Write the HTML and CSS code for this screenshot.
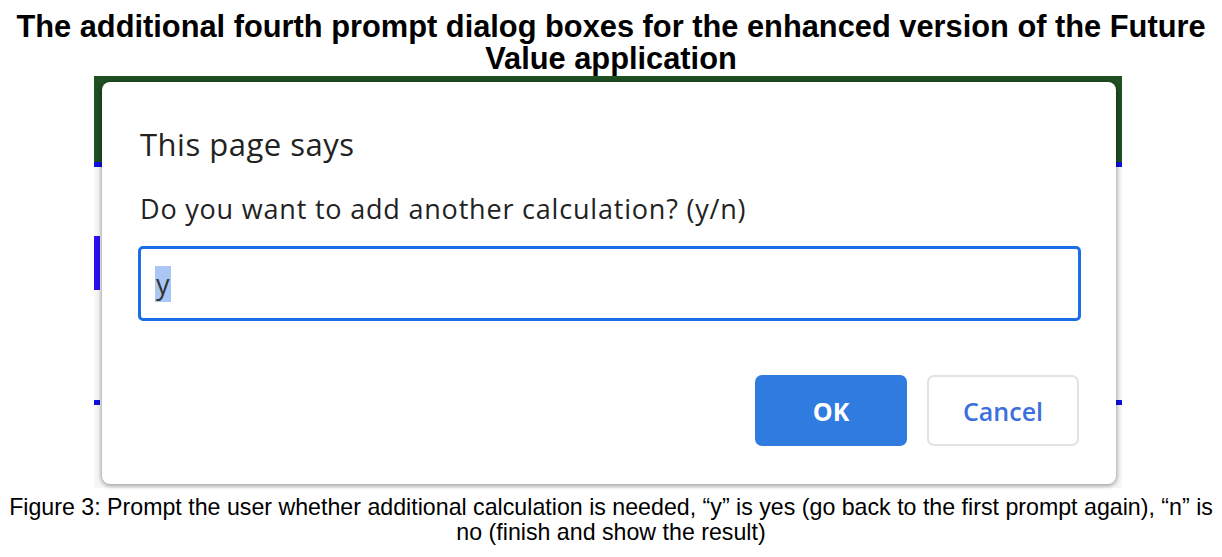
FILE: index.html
```html
<!DOCTYPE html>
<html>
<head>
<meta charset="utf-8">
<link rel="stylesheet" href="styles.css">
</head>
<body>
<h1 class="title">The additional fourth prompt dialog boxes for the enhanced version of the Future Value application</h1>
<div class="shot">
  <div class="dialog">
    <div class="heading">This page says</div>
    <div class="message">Do you want to add another calculation? (y/n)</div>
    <div class="field"><span class="sel">y</span></div>
    <div class="actions">
      <div class="btn ok">OK</div>
      <div class="btn cancel">Cancel</div>
    </div>
  </div>
</div>
<p class="caption">Figure 3: Prompt the user whether additional calculation is needed, “y” is yes (go back to the first prompt again), “n” is no (finish and show the result)</p>
</body>
</html>
```
FILE: styles.css
```css
html, body {
  margin: 0;
  padding: 0;
  background: #ffffff;
}
body {
  width: 1222px;
  height: 557px;
  overflow: hidden;
  font-family: "Liberation Sans", Arial, sans-serif;
  color: #000;
}
.title {
  margin: 11px 0 0 0;
  font-size: 30.8px;
  line-height: 32px;
  font-weight: bold;
  text-align: center;
  height: 65px;
}
.shot {
  margin-left: 94px;
  width: 1028px;
  height: 412px;
  display: flex;
  background-color: #f6f6f6;
  background-image:
    linear-gradient(#1f4f22, #1f4f22),
    linear-gradient(#1010e0, #1010e0),
    linear-gradient(#2a10f0, #2a10f0),
    linear-gradient(#1010e0, #1010e0),
    linear-gradient(#1010e0, #1010e0);
  background-size: 1028px 86px, 1028px 5px, 6px 54px, 6px 5px, 6px 5px;
  background-position: 0 0, 0 86px, 0 160px, 0 324px, 1022px 324px;
  background-repeat: no-repeat;
}
.dialog {
  margin: 6px 0 0 8px;
  width: 1014px;
  height: 402px;
  box-sizing: border-box;
  background: #fff;
  border-radius: 8px;
  box-shadow: 0 1px 4px 1px rgba(0,0,0,0.35);
  padding: 42px 35px 0 38px;
  font-family: "Open Sans", "Noto Sans", sans-serif;
  display: flex;
  flex-direction: column;
}
.heading {
  font-size: 31px;
  letter-spacing: 0.5px;
  line-height: 40px;
  color: #222;
}
.message {
  margin-top: 29px;
  font-size: 27px;
  letter-spacing: 0.8px;
  line-height: 32px;
  color: #222;
}
.field {
  margin: 21px 0 0 -2px;
  height: 75px;
  box-sizing: border-box;
  border: 3px solid #1a6fe6;
  border-radius: 5px;
  display: flex;
  align-items: center;
  padding-left: 14px;
}
.sel {
  background: #a9c6f5;
  color: #333;
  font-size: 27px;
  line-height: 36px;
  padding: 0 1px;
}
.actions {
  margin-top: 54px;
  display: flex;
  justify-content: flex-end;
  gap: 20px;
  padding-right: 2px;
}
.btn {
  width: 152px;
  height: 71px;
  box-sizing: border-box;
  border-radius: 7px;
  display: flex;
  align-items: center;
  justify-content: center;
  font-size: 25px;
}
.ok {
  background: #2f7be0;
  color: #fff;
  font-weight: bold;
}
.cancel {
  background: #fff;
  border: 2px solid #e2e2e2;
  color: #3d6fdc;
  font-weight: 600;
}
.caption {
  margin: 7px 0 0 0;
  font-size: 23.2px;
  line-height: 25px;
  text-align: center;
}
```
